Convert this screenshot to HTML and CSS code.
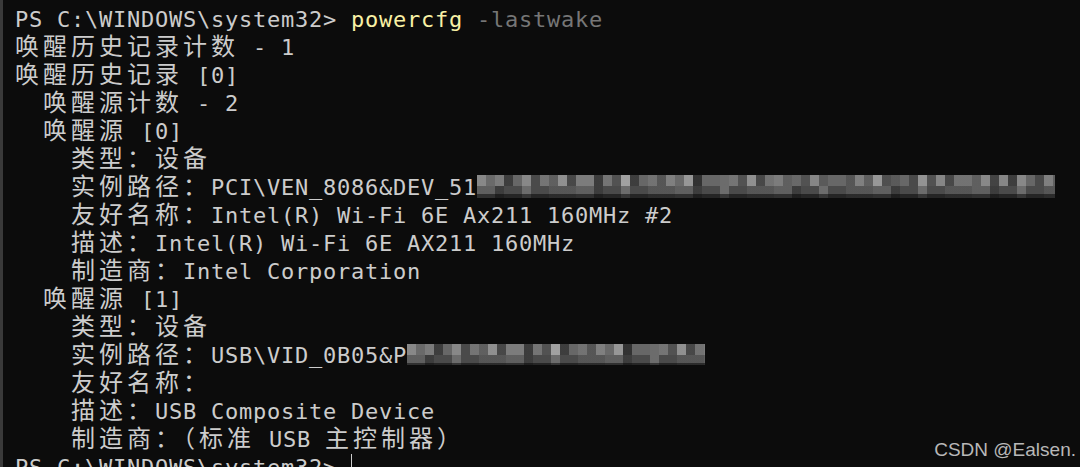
FILE: index.html
```html
<!DOCTYPE html>
<html lang="zh-CN">

<head>
    <meta charset="UTF-8">
    <meta name="viewport" content="width=device-width, initial-scale=1.0">
    <title>powercfg -lastwake</title>
    <link rel="stylesheet" href="styles.css">
</head>

<body>
    <div class="term">
        <div class="line">PS C:\WINDOWS\system32&gt; <span class="cmd">powercfg</span> <span class="arg">-lastwake</span></div>
        <div class="line"><span class="cjk">唤醒历史记录计数</span> - 1</div>
        <div class="line"><span class="cjk">唤醒历史记录</span> [0]</div>
        <div class="line">  <span class="cjk">唤醒源计数</span> - 2</div>
        <div class="line">  <span class="cjk">唤醒源</span> [0]</div>
        <div class="line">    <span class="cjk">类型：设备</span></div>
        <div class="line">    <span class="cjk">实例路径：</span>PCI\VEN_8086&amp;DEV_51<span class="blur blur-long"></span></div>
        <div class="line">    <span class="cjk">友好名称：</span>Intel(R) Wi-Fi 6E Ax211 160MHz #2</div>
        <div class="line">    <span class="cjk">描述：</span>Intel(R) Wi-Fi 6E AX211 160MHz</div>
        <div class="line">    <span class="cjk">制造商：</span>Intel Corporation</div>
        <div class="line">  <span class="cjk">唤醒源</span> [1]</div>
        <div class="line">    <span class="cjk">类型：设备</span></div>
        <div class="line">    <span class="cjk">实例路径：</span>USB\VID_0B05&amp;P<span class="blur blur-short"></span></div>
        <div class="line">    <span class="cjk">友好名称：</span></div>
        <div class="line">    <span class="cjk">描述：</span>USB Composite Device</div>
        <div class="line">    <span class="cjk">制造商：（标准</span> USB <span class="cjk">主控制器）</span></div>
        <div class="line">PS C:\WINDOWS\system32&gt; <span class="cursor"></span></div>
    </div>

    <!-- 水印 -->
    <div class="watermark">CSDN @Ealsen.</div>
</body>

</html>
```

FILE: styles.css
```css
html,
body {
    margin: 0;
    padding: 0;
    height: 467px;
    overflow: hidden;
    background-color: #0c0c0c;
}

body {
    position: relative;
}

.term {
    height: 467px;
    box-sizing: border-box;
    border-left: 3px solid #3a3a3a;
    padding: 6px 0 0 12px;
    overflow: hidden;
    color: #cccccc;
    font-family: "DejaVu Sans Mono", monospace;
    font-size: 22px;
    letter-spacing: 0.755px; /* 每格 14px */
    line-height: 28px;
}

.line {
    height: 28px;
    white-space: pre;
}

/* 中文占两格 */
.cjk {
    font-family: "Noto Sans CJK SC", sans-serif;
    font-size: 24px;
    letter-spacing: 4px;
    line-height: 22px;
}

.cmd {
    color: #f9f1a5;
}

.arg {
    color: #767676;
}

/* 打码区域 */
.blur {
    display: inline-block;
    vertical-align: -3px;
    height: 23px;
    background-color: #525252;
    background-image:
        linear-gradient(to bottom, rgba(0, 0, 0, 0) 0 11px, rgba(0, 0, 0, 0.1) 11px 19px, rgba(0, 0, 0, 0.55) 19px),
        repeating-linear-gradient(90deg, rgba(255, 255, 255, 0.2) 0 9px, rgba(255, 255, 255, 0) 9px 18px, rgba(255, 255, 255, 0.3) 18px 27px, rgba(0, 0, 0, 0.25) 27px 36px, rgba(255, 255, 255, 0.12) 36px 54px, rgba(0, 0, 0, 0.1) 54px 63px),
        repeating-linear-gradient(90deg, rgba(255, 255, 255, 0.14) 0 18px, rgba(0, 0, 0, 0.18) 18px 27px, rgba(255, 255, 255, 0) 27px 45px, rgba(255, 255, 255, 0.22) 45px 54px, rgba(0, 0, 0, 0) 54px 72px, rgba(255, 255, 255, 0.08) 72px 99px);
    background-size: 100% 100%, 100% 11px, 100% 100%;
    background-repeat: no-repeat, no-repeat, repeat;
    letter-spacing: 0;
}

.blur-long {
    width: 578px;
}

.blur-short {
    width: 298px;
    height: 21px;
    vertical-align: -2px;
}

.cursor {
    display: inline-block;
    vertical-align: top;
    width: 0;
    height: 28px;
    border-left: 1px solid #cccccc;
}

.watermark {
    position: absolute;
    top: 440px;
    right: 4px;
    color: #b8b8b8;
    font-family: "Liberation Sans", Arial, sans-serif;
    font-size: 19px;
    line-height: 19px;
}
```
